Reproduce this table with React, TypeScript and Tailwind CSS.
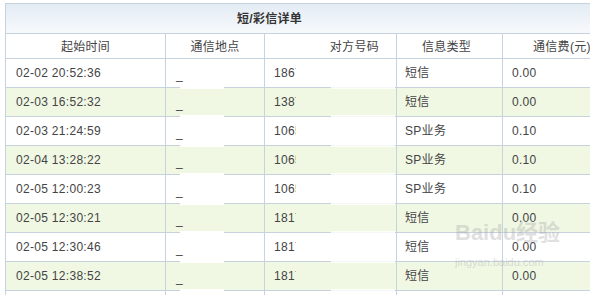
import React from "react";

type Row = { time: string; number: string; type: string; fee: string };

const ROWS: Row[] = [
  { time: "02-02 20:52:36", number: "1867", type: "短信", fee: "0.00" },
  { time: "02-03 16:52:32", number: "1387", type: "短信", fee: "0.00" },
  { time: "02-03 21:24:59", number: "1065", type: "SP业务", fee: "0.10" },
  { time: "02-04 13:28:22", number: "1065", type: "SP业务", fee: "0.10" },
  { time: "02-05 12:00:23", number: "1065", type: "SP业务", fee: "0.10" },
  { time: "02-05 12:30:21", number: "1817", type: "短信", fee: "0.00" },
  { time: "02-05 12:30:46", number: "1817", type: "短信", fee: "0.00" },
  { time: "02-05 12:38:52", number: "1817", type: "短信", fee: "0.00" },
  { time: "", number: "", type: "", fee: "" },
];

const COLS = "grid grid-cols-[160px_99px_132px_106px_1fr]";

export default function App() {
  return (
    <div
      className="relative h-[295px] w-[590px] overflow-hidden bg-white pt-[3px] pl-[5px] text-[12px] tracking-[0.3px] text-[#444]"
      style={{ fontFamily: '"Liberation Sans", "Noto Sans CJK SC", sans-serif' }}
    >
      <div className="w-[640px] border-t border-l border-[#c6d2de]">
        {/* title bar */}
        <div className="flex h-[30px] items-center border-b border-[#c6d2de] bg-gradient-to-b from-[#e3ebf4] to-[#f7fafc] pl-[231px] font-bold text-[#333]">
          短/彩信详单
        </div>

        {/* header */}
        <div className={`${COLS} h-[25px] border-b border-[#c6d2de] bg-white`}>
          <div className="flex items-center justify-center border-r border-[#c6d2de] pt-[1px]">起始时间</div>
          <div className="flex items-center justify-center border-r border-[#c6d2de] pt-[1px]">通信地点</div>
          <div className="flex items-center justify-end border-r border-[#c6d2de] pr-[17px] pt-[1px]">对方号码</div>
          <div className="flex items-center justify-center border-r border-[#c6d2de] pr-[6px] pt-[1px]">信息类型</div>
          <div className="flex items-center pl-[30px] pt-[1px]">通信费(元)</div>
        </div>

        {ROWS.map((r, i) => (
          <div
            key={i}
            className={`${COLS} h-[29px] border-b border-[#c6d2de] ${i % 2 === 1 ? "bg-[#f0f8e4]" : "bg-white"}`}
          >
            <div className="flex items-center border-r border-[#c6d2de] pl-[10px]">{r.time}</div>
            <div className="relative flex items-center border-r border-[#c6d2de] pl-[10px] pt-[3px]">
              {r.time && "_"}
              {i > 0 && <span className="absolute -top-[2px] left-[14px] h-[3px] w-[44px] bg-white" />}
            </div>
            <div className="relative flex items-center border-r border-[#c6d2de] pl-[9px]">
              <span className="inline-block w-[22px] overflow-hidden whitespace-nowrap">{r.number}</span>
              {i > 0 && <span className="absolute -top-[2px] left-[66px] h-[3px] w-[64px] bg-white opacity-80" />}
            </div>
            <div className="flex items-center border-r border-[#c6d2de] pl-[8px]">{r.type}</div>
            <div className="flex items-center pl-[9px]">{r.fee}</div>
          </div>
        ))}
      </div>

      {/* watermark */}
      <div className="pointer-events-none absolute left-[455px] top-[222px] select-none text-[#9a9a9a] opacity-30">
        <div className="text-[22px] font-bold leading-none tracking-normal">Baidu经验</div>
        <div className="mt-[10px] text-[11px] tracking-normal">jingyan.baidu.com</div>
      </div>
    </div>
  );
}
